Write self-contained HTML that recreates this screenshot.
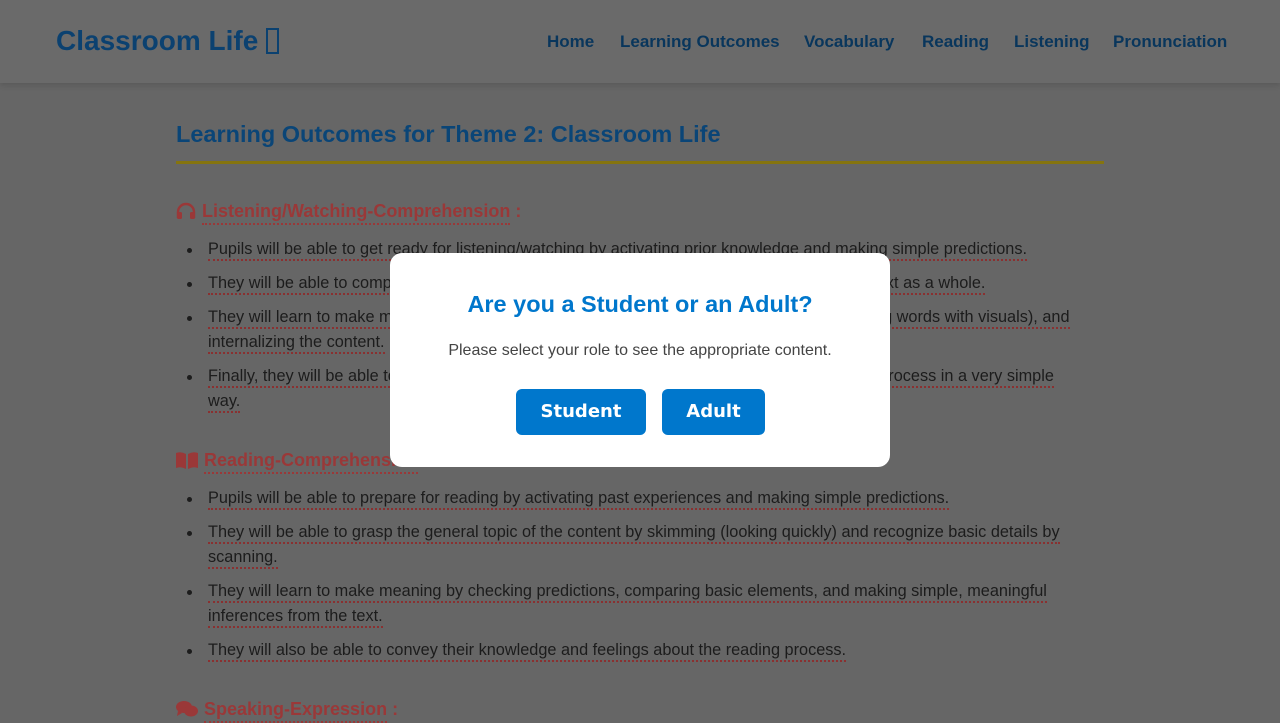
<!DOCTYPE html>
<html><head><meta charset="utf-8"><style>
*{margin:0;padding:0;box-sizing:border-box}
body{width:1280px;height:720px;overflow:hidden;background:#666;font-family:"Liberation Sans","DejaVu Sans",sans-serif;position:relative}
.hdr{position:absolute;left:0;top:0;width:1280px;height:83px;background:#6a6a6a;box-shadow:0 2px 6px rgba(0,0,0,.15)}
.logo{position:absolute;left:56px;top:25px;font-size:28px;font-weight:bold;color:#0b4170}
.nav{position:absolute;top:32px;font-size:17px;font-weight:bold;color:#09365c}
h1{position:absolute;left:176px;top:121px;font-size:23.5px;color:#0a4577;font-weight:bold}
.line{position:absolute;left:176px;top:161px;width:928px;height:3px;background:#85740f}
.sec{position:absolute;left:176px;font-size:18px;font-weight:bold;color:#9a3838}
.sec span{border-bottom:2px dotted #9a3838;padding-bottom:2px}
.sec svg{vertical-align:-3px;margin-right:6px}
ul{position:absolute;left:208px;width:868px;list-style:none}
li{position:relative;font-size:16.3px;color:#1c1c1c;line-height:25px;margin-bottom:9px}
li:before{content:"";position:absolute;left:-21px;top:11px;width:5px;height:5px;border-radius:50%;background:#1c1c1c}
li span{border-bottom:2px dotted #8a3030;padding-bottom:1px}
.modal{position:absolute;left:390px;top:253px;width:500px;height:214px;background:#fff;border-radius:12px;text-align:center}
.modal h2{margin-top:38px;font-size:23.5px;color:#0077cc;font-weight:bold}
.modal p{margin-top:24px;font-size:16px;color:#444}
.btn{position:absolute;top:136px;height:46px;background:#0077cc;color:#fff;border-radius:6px;font-family:"DejaVu Sans",sans-serif;font-weight:bold;font-size:18px;line-height:46px}
</style></head><body>
<div class="hdr"></div>
<div class="logo">Classroom Life <span style="display:inline-block;width:13px;height:26px;border:2px solid #0b4170;vertical-align:-4px"></span></div>
<div class="nav" style="left:547px">Home</div>
<div class="nav" style="left:620px">Learning Outcomes</div>
<div class="nav" style="left:804px">Vocabulary</div>
<div class="nav" style="left:922px">Reading</div>
<div class="nav" style="left:1014px">Listening</div>
<div class="nav" style="left:1113px">Pronunciation</div>
<h1>Learning Outcomes for Theme 2: Classroom Life</h1>
<div class="line"></div>

<div class="sec" style="top:201px"><svg width="20" height="18" viewBox="0 0 20 18"><path d="M2 16V10a8 8 0 0 1 16 0v6" fill="none" stroke="#9a3838" stroke-width="2.4"/><rect x="1" y="10" width="5" height="7" rx="1.5" fill="#9a3838"/><rect x="14" y="10" width="5" height="7" rx="1.5" fill="#9a3838"/></svg><span>Listening/Watching-Comprehension</span> :</div>
<ul style="top:237px">
<li><span>Pupils will be able to get ready for listening/watching by activating prior knowledge and making simple predictions.</span></li>
<li><span>They will be able to comprehend the general idea and basic details of the listening/watching text as a whole.</span></li>
<li><span>They will learn to make meaning by checking predictions, using simple strategies (like grouping words with visuals), and internalizing the content.</span></li>
<li><span>Finally, they will be able to express their knowledge and feelings about the listening/watching process in a very simple way.</span></li>
</ul>

<div class="sec" style="top:450px"><svg width="22" height="18" viewBox="0 0 22 18"><path d="M0 2q5-2 10 1v15q-5-3-10-1zM22 2q-5-2-10 1v15q5-3 10-1z" fill="#9a3838"/></svg><span>Reading-Comprehension</span> :</div>
<ul style="top:486px">
<li><span>Pupils will be able to prepare for reading by activating past experiences and making simple predictions.</span></li>
<li><span>They will be able to grasp the general topic of the content by skimming (looking quickly) and recognize basic details by scanning.</span></li>
<li><span>They will learn to make meaning by checking predictions, comparing basic elements, and making simple, meaningful inferences from the text.</span></li>
<li><span>They will also be able to convey their knowledge and feelings about the reading process.</span></li>
</ul>

<div class="sec" style="top:699px"><svg width="22" height="18" viewBox="0 0 22 18"><ellipse cx="8" cy="7" rx="8" ry="6" fill="#9a3838"/><ellipse cx="15" cy="11" rx="7" ry="5.5" fill="#9a3838"/><path d="M2 11l-1 5 5-3z" fill="#9a3838"/></svg><span>Speaking-Expression</span> :</div>

<div class="modal">
<h2>Are you a Student or an Adult?</h2>
<p>Please select your role to see the appropriate content.</p>
<div class="btn" style="left:126px;width:130px">Student</div>
<div class="btn" style="left:272px;width:103px">Adult</div>
</div>
</body></html>
